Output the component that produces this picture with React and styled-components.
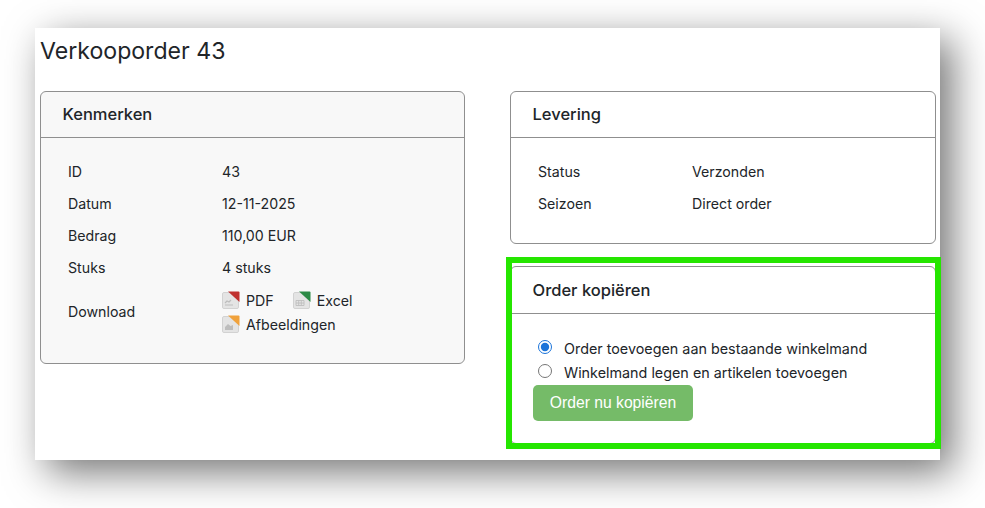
import React from 'react'
import styled, { createGlobalStyle } from 'styled-components'

const GlobalStyle = createGlobalStyle`
  html, body {
    margin: 0;
    padding: 0;
    background: #fff;
    overflow: hidden;
  }
  body {
    font-family: 'Inter', 'Noto Sans', sans-serif;
    color: #212529;
  }
`

const Stage = styled.div`
  width: 985px;
  height: 508px;
  padding: 28px 45px 48px 35px;
  box-sizing: border-box;
  overflow: hidden;
`

const Sheet = styled.div`
  height: 432px;
  background: #fff;
  box-shadow: 12px 12px 38px rgba(0, 0, 0, 0.55);
  padding: 8px 4px 0 5px;
  box-sizing: border-box;
`

const PageTitle = styled.h1`
  margin: 0 0 24px;
  font-size: 23.1px;
  line-height: 31px;
  font-weight: 400;
  color: #212529;
`

const Columns = styled.div`
  display: grid;
  grid-template-columns: 425px 426px;
  column-gap: 45px;
  align-items: start;
`

const Stack = styled.div`
  display: flex;
  flex-direction: column;
`

const Card = styled.section`
  border: 1px solid #8f8f8f;
  border-radius: 6px;
  background: ${p => (p.$muted ? '#f8f8f8' : '#fff')};
  box-sizing: border-box;
  height: ${p => p.$height}px;
`

const CardHeader = styled.h2`
  margin: 0;
  height: ${p => (p.$tall ? 47 : 46)}px;
  padding: 0 22px 1px 21.5px;
  display: flex;
  align-items: center;
  font-size: 16.5px;
  font-weight: 500;
  border-bottom: 1px solid #8f8f8f;
  box-sizing: border-box;
`

const CardBody = styled.div`
  padding: 17.5px 27px 0;
`

const Row = styled.div`
  display: grid;
  grid-template-columns: 154px 1fr;
  align-items: center;
  min-height: 32px;
  font-size: 14.2px;
`

const DownloadRow = styled(Row)`
  margin-top: 3.5px;
`

const LinkGroup = styled.div`
  padding-top: 1px;
`

const LinkRow = styled.div`
  display: flex;
  align-items: center;
  gap: 19px;
  height: 24px;
`

const FileLink = styled.span`
  display: inline-flex;
  align-items: center;
  gap: 6px;
`

const Highlight = styled.div`
  position: relative;
  margin-top: 22px;
`

const GreenFrame = styled.div`
  position: absolute;
  top: -9px;
  left: -4px;
  right: -5px;
  bottom: -5px;
  border: 6px solid #25e600;
  pointer-events: none;
`

const RadioRow = styled.label`
  display: flex;
  align-items: center;
  gap: 12px;
  height: 24px;
  padding-left: 5px;
  font-size: 14.35px;
`

const Radio = styled.input`
  margin: -3px 0 0;
  width: 14px;
  height: 14px;
  accent-color: #1a73d9;
`

const CopyBody = styled.div`
  padding: 22px 22px 0;
`

const CopyButton = styled.button`
  display: block;
  width: 160px;
  height: 36px;
  margin-top: 1px;
  border: 0;
  border-radius: 5px;
  background: #75bb68;
  color: #fff;
  font-family: 'Liberation Sans', Arial, sans-serif;
  font-size: 15.7px;
  padding: 0;
`

const FileIcon = ({ color, children }) => (
  <svg width="18" height="18" viewBox="0 0 18 18">
    <rect x="0.5" y="1.5" width="16" height="16" rx="1.5" fill="#e4e4e4" stroke="#d2d2d2" />
    {children}
    <path d="M6 0.5h10.5a1 1 0 0 1 1 1v9.5z" fill={color} />
  </svg>
)

const App = () => (
  <Stage>
    <GlobalStyle />
    <Sheet>
      <PageTitle>Verkooporder 43</PageTitle>
      <Columns>
        <Card $muted $height={273}>
          <CardHeader>Kenmerken</CardHeader>
          <CardBody>
            <Row><span>ID</span><span>43</span></Row>
            <Row><span>Datum</span><span>12-11-2025</span></Row>
            <Row><span>Bedrag</span><span>110,00 EUR</span></Row>
            <Row><span>Stuks</span><span>4 stuks</span></Row>
            <DownloadRow>
              <span>Download</span>
              <LinkGroup>
                <LinkRow>
                  <FileLink>
                    <FileIcon color="#c0312f">
                      <path d="M3 14h8M3 12l2-2 2 1 2-2" stroke="#bdbdbd" strokeWidth="1.2" fill="none" />
                    </FileIcon>
                    PDF
                  </FileLink>
                  <FileLink>
                    <FileIcon color="#2c8a46">
                      <path d="M3 9.5h8v5H3zM3 12h8M5.7 9.5v5M8.3 9.5v5" stroke="#bdbdbd" strokeWidth="0.9" fill="none" />
                    </FileIcon>
                    Excel
                  </FileLink>
                </LinkRow>
                <LinkRow>
                  <FileLink>
                    <FileIcon color="#f0a23c">
                      <path d="M3 15v-3l3-3 2.5 2 2.5-1v5z" fill="#bdbdbd" />
                    </FileIcon>
                    Afbeeldingen
                  </FileLink>
                </LinkRow>
              </LinkGroup>
            </DownloadRow>
          </CardBody>
        </Card>
        <Stack>
          <Card $height={153}>
            <CardHeader>Levering</CardHeader>
            <CardBody>
              <Row><span>Status</span><span>Verzonden</span></Row>
              <Row><span>Seizoen</span><span>Direct order</span></Row>
            </CardBody>
          </Card>
          <Highlight>
            <Card $height={178}>
              <CardHeader $tall>Order kopiëren</CardHeader>
              <CopyBody>
                <RadioRow>
                  <Radio type="radio" name="copy" defaultChecked />
                  Order toevoegen aan bestaande winkelmand
                </RadioRow>
                <RadioRow>
                  <Radio type="radio" name="copy" />
                  Winkelmand legen en artikelen toevoegen
                </RadioRow>
                <CopyButton type="button">Order nu kopiëren</CopyButton>
              </CopyBody>
            </Card>
            <GreenFrame />
          </Highlight>
        </Stack>
      </Columns>
    </Sheet>
  </Stage>
)

export default App
